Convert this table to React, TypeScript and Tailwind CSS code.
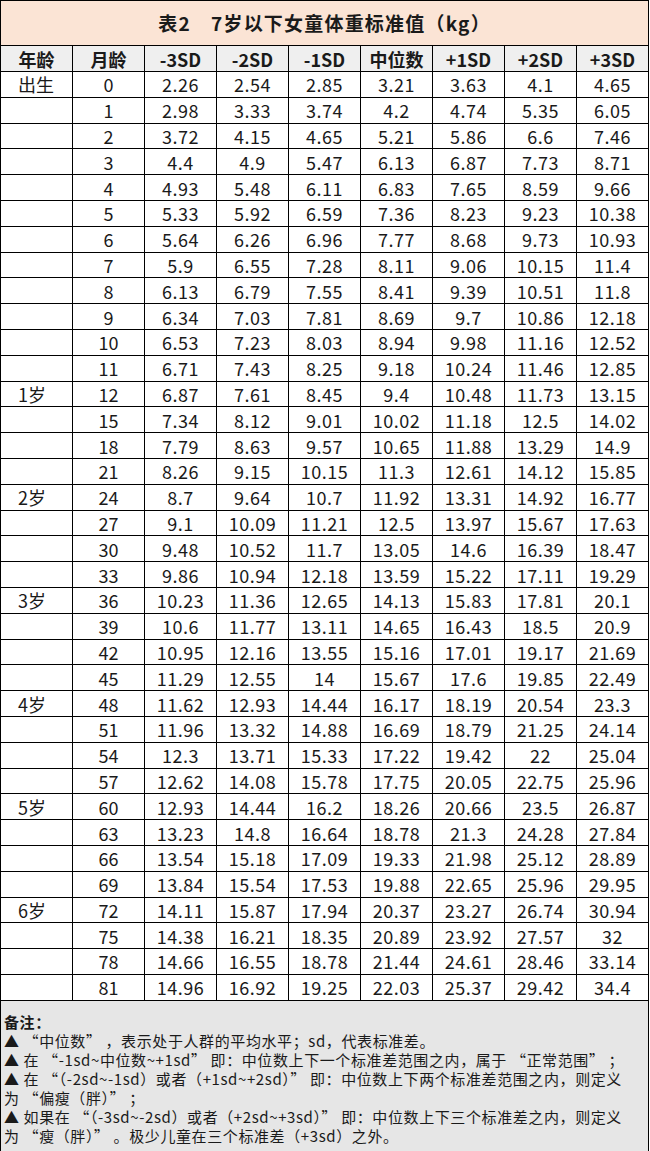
import React from 'react';

const font = { fontFamily: '"Noto Sans CJK SC", "Noto Sans", sans-serif' };

const headers = ['年龄', '月龄', '-3SD', '-2SD', '-1SD', '中位数', '+1SD', '+2SD', '+3SD'];

const rows: [string, string, string[]][] = [
  ['出生', '0', ['2.26', '2.54', '2.85', '3.21', '3.63', '4.1', '4.65']],
  ['', '1', ['2.98', '3.33', '3.74', '4.2', '4.74', '5.35', '6.05']],
  ['', '2', ['3.72', '4.15', '4.65', '5.21', '5.86', '6.6', '7.46']],
  ['', '3', ['4.4', '4.9', '5.47', '6.13', '6.87', '7.73', '8.71']],
  ['', '4', ['4.93', '5.48', '6.11', '6.83', '7.65', '8.59', '9.66']],
  ['', '5', ['5.33', '5.92', '6.59', '7.36', '8.23', '9.23', '10.38']],
  ['', '6', ['5.64', '6.26', '6.96', '7.77', '8.68', '9.73', '10.93']],
  ['', '7', ['5.9', '6.55', '7.28', '8.11', '9.06', '10.15', '11.4']],
  ['', '8', ['6.13', '6.79', '7.55', '8.41', '9.39', '10.51', '11.8']],
  ['', '9', ['6.34', '7.03', '7.81', '8.69', '9.7', '10.86', '12.18']],
  ['', '10', ['6.53', '7.23', '8.03', '8.94', '9.98', '11.16', '12.52']],
  ['', '11', ['6.71', '7.43', '8.25', '9.18', '10.24', '11.46', '12.85']],
  ['1岁', '12', ['6.87', '7.61', '8.45', '9.4', '10.48', '11.73', '13.15']],
  ['', '15', ['7.34', '8.12', '9.01', '10.02', '11.18', '12.5', '14.02']],
  ['', '18', ['7.79', '8.63', '9.57', '10.65', '11.88', '13.29', '14.9']],
  ['', '21', ['8.26', '9.15', '10.15', '11.3', '12.61', '14.12', '15.85']],
  ['2岁', '24', ['8.7', '9.64', '10.7', '11.92', '13.31', '14.92', '16.77']],
  ['', '27', ['9.1', '10.09', '11.21', '12.5', '13.97', '15.67', '17.63']],
  ['', '30', ['9.48', '10.52', '11.7', '13.05', '14.6', '16.39', '18.47']],
  ['', '33', ['9.86', '10.94', '12.18', '13.59', '15.22', '17.11', '19.29']],
  ['3岁', '36', ['10.23', '11.36', '12.65', '14.13', '15.83', '17.81', '20.1']],
  ['', '39', ['10.6', '11.77', '13.11', '14.65', '16.43', '18.5', '20.9']],
  ['', '42', ['10.95', '12.16', '13.55', '15.16', '17.01', '19.17', '21.69']],
  ['', '45', ['11.29', '12.55', '14', '15.67', '17.6', '19.85', '22.49']],
  ['4岁', '48', ['11.62', '12.93', '14.44', '16.17', '18.19', '20.54', '23.3']],
  ['', '51', ['11.96', '13.32', '14.88', '16.69', '18.79', '21.25', '24.14']],
  ['', '54', ['12.3', '13.71', '15.33', '17.22', '19.42', '22', '25.04']],
  ['', '57', ['12.62', '14.08', '15.78', '17.75', '20.05', '22.75', '25.96']],
  ['5岁', '60', ['12.93', '14.44', '16.2', '18.26', '20.66', '23.5', '26.87']],
  ['', '63', ['13.23', '14.8', '16.64', '18.78', '21.3', '24.28', '27.84']],
  ['', '66', ['13.54', '15.18', '17.09', '19.33', '21.98', '25.12', '28.89']],
  ['', '69', ['13.84', '15.54', '17.53', '19.88', '22.65', '25.96', '29.95']],
  ['6岁', '72', ['14.11', '15.87', '17.94', '20.37', '23.27', '26.74', '30.94']],
  ['', '75', ['14.38', '16.21', '18.35', '20.89', '23.92', '27.57', '32']],
  ['', '78', ['14.66', '16.55', '18.78', '21.44', '24.61', '28.46', '33.14']],
  ['', '81', ['14.96', '16.92', '19.25', '22.03', '25.37', '29.42', '34.4']],
];

const notes = [
  '▲ “中位数” ，表示处于人群的平均水平；sd，代表标准差。',
  '▲ 在 “-1sd~中位数~+1sd” 即：中位数上下一个标准差范围之内，属于 “正常范围” ；',
  '▲ 在 “（-2sd~-1sd）或者（+1sd~+2sd）” 即：中位数上下两个标准差范围之内，则定义',
  '为 “偏瘦（胖）” ；',
  '▲ 如果在 “（-3sd~-2sd）或者（+2sd~+3sd）” 即：中位数上下三个标准差之内，则定义',
  '为 “瘦（胖）” 。极少儿童在三个标准差（+3sd）之外。',
];

export default function App() {
  return (
    <div className="w-[650px] bg-white text-[#1a1a1a]" style={font}>
      <table className="w-[649px] table-fixed border-collapse">
        <colgroup>
          {headers.map((h) => (
            <col key={h} className="w-[72px]" />
          ))}
        </colgroup>
        <thead>
          <tr className="h-[45px] bg-[#fbe4d5]">
            <th
              colSpan={9}
              className="border border-black text-center text-[19px] font-bold tracking-[1.2px]"
            >
              表2　7岁以下女童体重标准值（kg）
            </th>
          </tr>
          <tr className="h-[26px] bg-[#efefef]">
            {headers.map((h) => (
              <th key={h} className="border border-black p-0 text-center text-[18px] font-bold leading-none">
                {h}
              </th>
            ))}
          </tr>
        </thead>
        <tbody>
          {rows.map(([age, month, vals]) => (
            <tr key={month} className="h-[25.8px]">
              <td className="border border-black p-0 pl-[17px] text-left text-[18px] leading-none">{age}</td>
              <td className="border border-black p-0 text-center text-[18px] leading-none">{month}</td>
              {vals.map((v, i) => (
                <td key={i} className="border border-black p-0 text-center text-[18px] leading-none tracking-[0.5px]">
                  {v}
                </td>
              ))}
            </tr>
          ))}
        </tbody>
      </table>
      <div className="w-[649px] border border-t-0 border-black bg-[#e6e6e6] px-[3px] pt-[11px] pb-[6px] text-[15px] leading-[19px] tracking-[0.6px]">
        <div className="font-bold">备注：</div>
        {notes.map((n) => (
          <div key={n} className="whitespace-nowrap">
            {n}
          </div>
        ))}
      </div>
    </div>
  );
}
